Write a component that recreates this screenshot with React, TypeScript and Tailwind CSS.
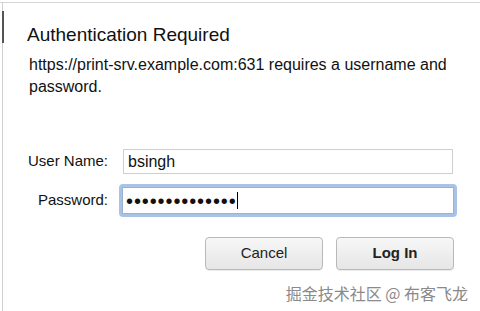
export default function App() {
  return (
    <div className="w-[480px] h-[311px] bg-white overflow-hidden relative font-['Liberation_Sans',Arial,sans-serif] text-[#1a1a1a]">
      {/* window frame edges */}
      <div className="absolute left-0 top-[2px] right-0 h-px bg-[#d6d6d6]" />
      <div className="absolute left-[2px] top-[2px] bottom-0 w-px bg-[#cfcfcf]" />
      <div className="absolute left-[2px] top-[11px] w-[2px] h-[32px] bg-[#555]" />

      <div className="pl-[27px] pt-[23px]">
        <h1 className="text-[19px] leading-[24px] text-[#111]">Authentication Required</h1>
        <p className="mt-[7px] pl-[2px] text-[16px] leading-[22px] w-[440px] text-[#111]">
          https://print-srv.example.com:631 requires a username and password.
        </p>
      </div>

      <div className="mt-[51px] flex flex-col gap-[10px]">
        <div className="flex items-center">
          <label className="w-[108px] text-right text-[15px] text-[#111]">User Name:</label>
          <div className="ml-[15px] w-[330px] h-[25px] border border-[#cfcfcf] flex items-center pl-[4px] text-[16px] text-[#111]">
            bsingh
          </div>
        </div>
        <div className="flex items-center">
          <label className="w-[108px] text-right text-[15px] text-[#111]">Password:</label>
          <div className="ml-[11px] w-[338px] h-[33px] rounded-[4px] bg-[#a9c3e6] p-[3px]">
            <div className="w-full h-full bg-white border border-[#9ab1d4] flex items-center pl-[3px] text-[20px] leading-none tracking-[0.9px] text-[#111]">
              ••••••••••••••<span className="inline-block w-[1.5px] h-[17px] bg-black" />
            </div>
          </div>
        </div>
      </div>

      <div className="mt-[20px] flex justify-end gap-[13px] pr-[26px]">
        <button className="w-[118px] h-[33px] rounded-[4px] border border-[#b9b9b9] bg-gradient-to-b from-[#f7f7f7] to-[#e6e6e6] text-[15px] text-[#222] shadow-[0_1px_0_rgba(0,0,0,0.08)]">
          Cancel
        </button>
        <button className="w-[118px] h-[33px] rounded-[4px] border border-[#b9b9b9] bg-gradient-to-b from-[#f7f7f7] to-[#e6e6e6] text-[15px] font-bold text-[#222] shadow-[0_1px_0_rgba(0,0,0,0.08)]">
          Log In
        </button>
      </div>

      <div className="absolute right-[12px] top-[282px] text-[16px] leading-[22px] text-[#8a8a8a] font-['Noto_Sans_CJK_SC',sans-serif]">
        掘金技术社区 @ 布客飞龙
      </div>
    </div>
  );
}
